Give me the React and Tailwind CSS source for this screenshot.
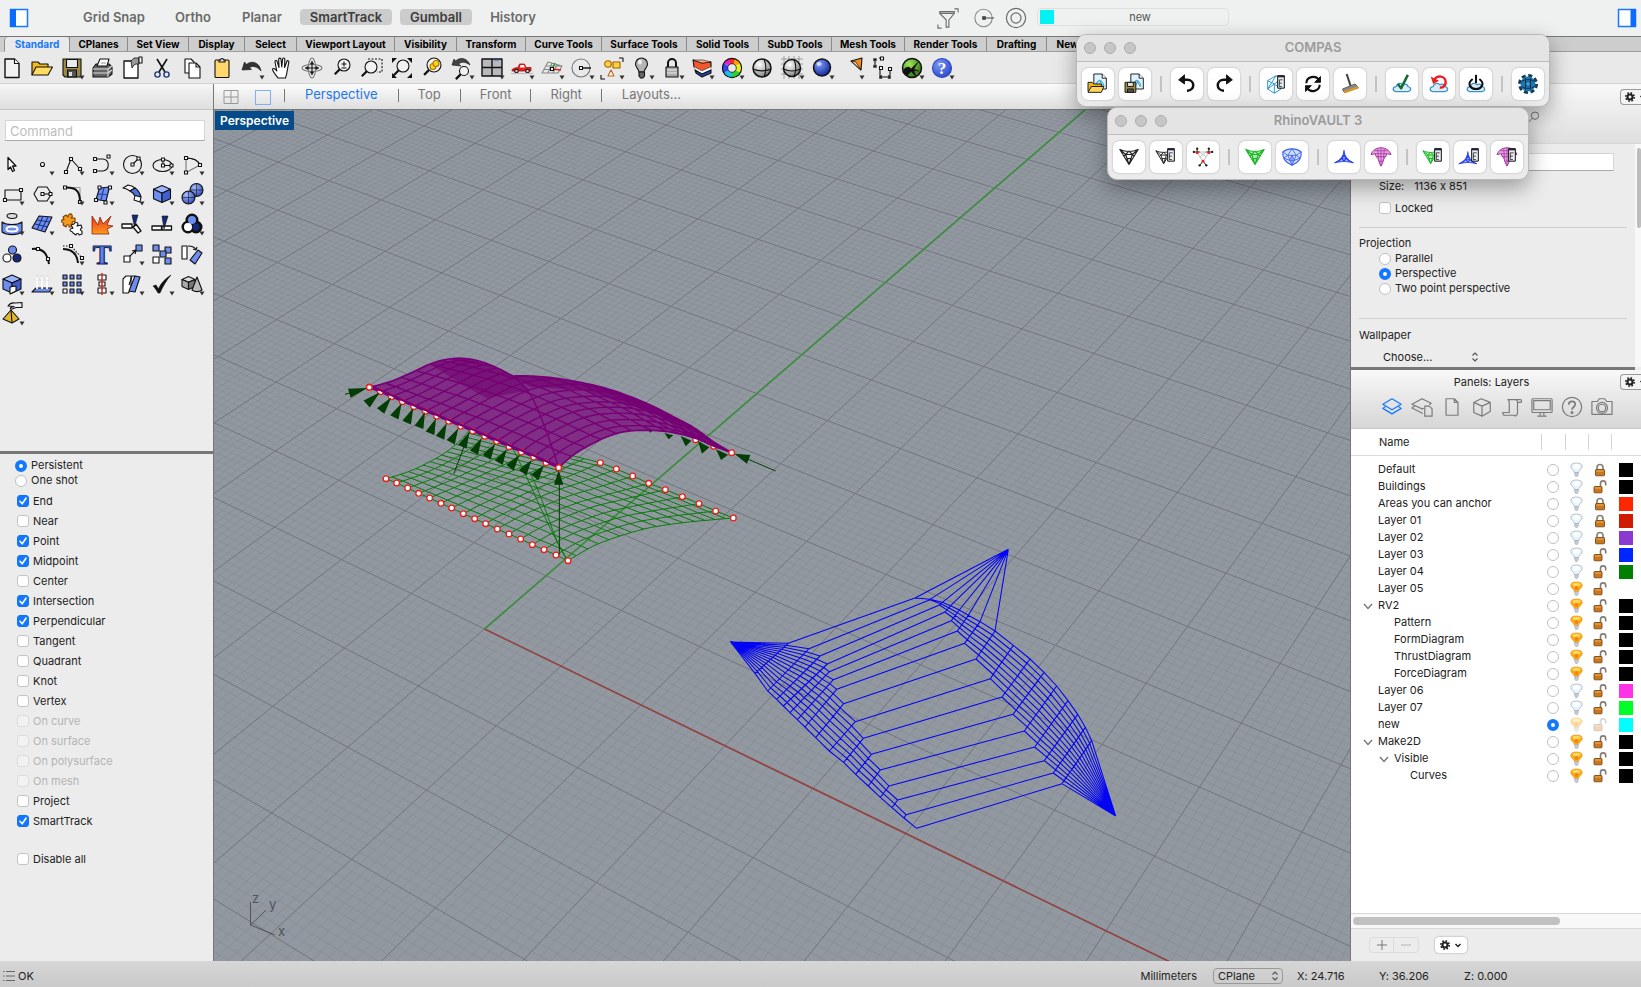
import React from "react";

/* ---------- construction plane projection ---------- */
const project = (u, v) => {
  const d = 1 - 0.0226 * u + 0.034 * v;
  return [(484.5 + 63.77 * u + 80.2 * v) / d, (629 + 22.07 * u - 33.7 * v) / d];
};
const f = (n) => n.toFixed(1);
const seg = (a, b) => `M${f(a[0])} ${f(a[1])}L${f(b[0])} ${f(b[1])}`;
const poly = (pts) => "M" + pts.map((p) => `${f(p[0])} ${f(p[1])}`).join("L");

const U0 = -13, U1 = 10, V0 = -5, V1 = 19;
let minorPath = "";
let majorPath = "";
for (let i = U0 * 10; i <= U1 * 10; i++) {
  const s = seg(project(i / 10, V0), project(i / 10, V1));
  if (i % 10 === 0) majorPath += s;
  else minorPath += s;
}
for (let i = V0 * 10; i <= V1 * 10; i++) {
  const s = seg(project(U0, i / 10), project(U1, i / 10));
  if (i % 10 === 0) majorPath += s;
  else minorPath += s;
}
const xAxis = seg(project(0, 0), project(10, 0));
const yAxis = seg(project(0, 0), project(0, 19));

/* ---------- helpers for surface patches ---------- */
const at = (pts, t) => {
  const x = Math.min(Math.max(t, 0), 1) * (pts.length - 1);
  const i = Math.min(Math.floor(x), pts.length - 2);
  const k = x - i;
  return [pts[i][0] + (pts[i + 1][0] - pts[i][0]) * k, pts[i][1] + (pts[i + 1][1] - pts[i][1]) * k];
};
const smooth = (pts) => {
  let out = [];
  const n = pts.length;
  for (let i = 0; i < n - 1; i++) {
    const p0 = pts[Math.max(i - 1, 0)], p1 = pts[i], p2 = pts[i + 1], p3 = pts[Math.min(i + 2, n - 1)];
    for (let k = 0; k < 8; k++) {
      const t = k / 8;
      out.push([0, 1].map((c) => 0.5 * (2 * p1[c] + (p2[c] - p0[c]) * t + (2 * p0[c] - 5 * p1[c] + 4 * p2[c] - p3[c]) * t * t + (3 * p1[c] - p0[c] - 3 * p2[c] + p3[c]) * t * t * t)));
    }
  }
  out.push(pts[n - 1]);
  return out;
};
const coons = (L, R, C0, C1) => (s, t) => {
  const l = at(L, s), r = at(R, s), a = at(C0, t), b = at(C1, t);
  const l0 = L[0], l1 = L[L.length - 1], r0 = R[0], r1 = R[R.length - 1];
  return [0, 1].map(
    (c) => (1 - t) * l[c] + t * r[c] + (1 - s) * a[c] + s * b[c] - ((1 - s) * ((1 - t) * l0[c] + t * r0[c]) + s * ((1 - t) * l1[c] + t * r1[c]))
  );
};
const mesh = (P, ns, nt, ease = 1) => {
  let d = "";
  for (let i = 0; i <= ns; i++) {
    const pts = [];
    for (let k = 0; k <= 30; k++) pts.push(P(i / ns, k / 30));
    d += poly(pts);
  }
  for (let j = 0; j <= nt; j++) {
    const t = 1 - Math.pow(1 - j / nt, ease);
    const pts = [];
    for (let k = 0; k <= 30; k++) pts.push(P(k / 30, t));
    d += poly(pts);
  }
  return d;
};

/* ---------- form diagram (green) ---------- */
const formLeft = [[168,416],[200,429],[233,444],[266,460],[299,474],[333,490],[365,504],[400,521],[434,536],[467,551],[502,567],[537,582],[572,597],[607,614],[642,629],[678,645],[714,662]];
const formRight = [[811,368],[859,387],[908,408],[956,430],[1006,449],[1057,470],[1107,491],[1157,513],[1210,534]];
const formBack = [];
for (let i = 0; i < 8; i++) formBack.push([420 + (391 * i) / 8, 270 + (98 * i) / 8]);
const formMesh = mesh(
  coons(formLeft, formBack.concat(formRight), smooth([[168,416],[235,395],[300,365],[350,335],[390,302],[420,270]]), smooth([[714,662],[790,618],[870,588],[960,563],[1060,548],[1140,540],[1210,534]])),
  16, 15
);

/* ---------- thrust diagram (purple) ---------- */
const thrustLeft = [[118,142],[151,155],[184,170],[217,185],[251,200],[286,214],[320,229],[356,244],[392,259],[428,273],[464,289],[500,304],[537,320],[574,336],[611,351],[648,368],[686,383]];
const hump = smooth([[118,142],[180,125],[240,100],[300,72],[350,58],[400,55],[450,64],[500,83],[548,108]]);
const crest = smooth([[548,108],[600,108],[680,115],[780,133],[860,155],[950,190],[1030,230],[1090,262],[1150,305],[1205,338]]);
const arch = smooth([[686,383],[730,345],[780,315],[840,287],[900,273],[980,272],[1040,280],[1100,296],[1150,318],[1205,338]]);
const thrustMesh = mesh(coons(thrustLeft, crest, hump, arch), 16, 15, 1.5);
const thrustOutline = poly(hump.concat(crest, arch.slice().reverse())) + "Z";

const cones = [
  [[112,144],[58,160]],[[150,157],[110,192]],[[184,172],[152,213]],[[215,190],[193,232]],[[250,203],[230,248]],[[285,215],[267,262]],[[318,235],[300,280]],[[350,250],[330,293]],[[385,265],[362,307]],[[418,277],[397,320]],[[455,295],[432,338]],[[495,312],[470,352]],[[530,328],[506,368]],[[568,345],[540,383]],[[605,360],[578,398]],[[642,376],[614,412]],[[686,390],[686,434]],[[1213,341],[1256,358]],
].map(([a, b]) => {
  const dx = b[0] - a[0], dy = b[1] - a[1], n = Math.hypot(dx, dy), w = 14;
  return `M${a[0]} ${a[1]}L${f(b[0] - (dy / n) * w)} ${f(b[1] + (dx / n) * w)}L${f(b[0] + (dy / n) * w)} ${f(b[1] - (dx / n) * w)}Z`;
}).join("");

/* ---------- force diagram (blue) ---------- */
const A = [92,336], B = [925,58], C = [1247,858];
const P = [[265,340],[327,356],[360,378],[382,402],[388,425],[400,449],[410,478],[431,521],[466,575],[490,625],[514,673],[541,720],[567,768],[593,810],[618,854],[650,895]];
const O = [[165,430],[203,483],[230,508],[250,528],[270,548],[292,569],[315,591],[347,623],[388,663],[431,697],[467,733],[505,768],[541,802],[576,833],[612,864],[650,895]];
const Q = [[645,204],[690,209],[718,225],[735,246],[754,272],[772,303],[794,340],[828,387],[871,446],[906,501],[939,553],[973,603],[1004,651],[1033,692],[1060,729],[1086,761]];
const W = [[645,204],[690,208],[727,217],[752,227],[778,240],[805,256],[840,275],[885,303],[940,346],[990,387],[1032,427],[1070,468],[1104,512],[1133,553],[1156,592],[1175,632]];
const mix = (a, b, k) => [a[0] + (b[0] - a[0]) * k, a[1] + (b[1] - a[1]) * k];
let force = "";
for (let i = 0; i < 16; i++) {
  force += seg(P[i], Q[i]) + seg(P[i], O[i]) + seg(Q[i], W[i]);
  if (i < 8) force += seg(W[i], B);
  const left = [A];
  for (let k = 0; k < i; k++) left.push(mix(P[k], O[k], (i - k) / (15 - k)));
  left.push(P[i]);
  force += poly(left);
  const right = [Q[i]];
  for (let k = i + 1; k < 16; k++) right.push(mix(Q[k], W[k], (k - i) / k));
  right.push(C);
  force += poly(right);
}

const Support = ({ p }) => <circle cx={p[0]} cy={p[1]} r="8.5" fill="#fff" stroke="#e8201c" strokeWidth="4" />;

function Scene() {
  return (
    <svg viewBox="214 110 1136 851" preserveAspectRatio="xMidYMid slice" className="absolute inset-0 h-full w-full" role="img" aria-label="Perspective view of form, thrust and force diagrams">
      <defs>
        <clipPath id="thrust"><path d={thrustOutline} /></clipPath>
      </defs>
      <rect x="0" y="0" width="1641" height="987" fill="#9198a0" />
      <path d={minorPath} stroke="#7c848d" strokeOpacity="0.5" strokeWidth="0.8" fill="none" />
      <path d={majorPath} stroke="#74747d" strokeWidth="1" fill="none" />
      <path d={xAxis} stroke="#934343" strokeWidth="1.7" />
      <path d={yAxis} stroke="#3d8d3f" strokeWidth="1.7" />
      <g transform="translate(330 340) scale(0.33333)" fill="none">
        <path d={formMesh} stroke="#087a08" strokeWidth="3" />
        <path d="M545 320C590 400 650 560 714 662M600 400C640 470 670 600 708 655" stroke="#087a08" strokeWidth="3" />
        <path d="M418 277L372 400M45 163L70 156M688 430V645M1250 356L1337 393" stroke="#063a06" strokeWidth="3" />
        {formLeft.map((p, i) => <Support key={i} p={p} />)}
        {formRight.map((p, i) => <Support key={i} p={p} />)}
        <Support p={[1097,299]} />
        <Support p={[1151,319]} />
        <path d={thrustOutline} fill="#802d86" stroke="#78007a" strokeWidth="5" />
        <g clipPath="url(#thrust)">
          <path d="M300 72L400 55L500 83L548 108L600 150L470 175L390 130Z" fill="#72066f" fillOpacity="0.6" />
          <path d="M548 108L680 115L860 155L1030 230L1205 338L1100 280L960 215L760 150L600 140Z" fill="#72066f" fillOpacity="0.7" />
          <path d={thrustMesh} stroke="#750073" strokeWidth="4" />
          <path d="M686 383C660 300 640 240 610 180C595 150 575 128 548 108" stroke="#750073" strokeWidth="4" />
        </g>
        {thrustLeft.map((p, i) => <Support key={i} p={p} />)}
        <path d={poly(thrustLeft)} transform="translate(4 -3)" stroke="#78007a" strokeWidth="7" />
        <path d={cones} fill="#033c05" />
        <path d="M1003 279L1030 286L1016 298ZM1052 288L1084 302L1067 319ZM1104 304L1138 322L1116 341ZM1158 328L1194 344L1173 360ZM957 273H966L961 278Z" fill="#033c05" />
        <Support p={[118,142]} />
        <Support p={[686,383]} />
        <Support p={[1205,338]} />
      </g>
      <path d={force} transform="translate(700 530) scale(0.33333)" fill="none" stroke="#0404f4" strokeWidth="3.2" />
      <g stroke="#50545a" fill="none"><path d="M250.5 902V925L266 910M250.5 925L275 935" /></g>
      <g fill="#50545a" fontSize="13" className="font-[Inter,sans-serif]">
        <text x="252" y="903">z</text><text x="269" y="909">y</text><text x="278" y="936">x</text>
      </g>
    </svg>
  );
}

/* ---------- icon primitives ---------- */
const Svg = ({ children, className = "h-6 w-6" }) => (
  <svg viewBox="0 0 24 24" className={className + " shrink-0 overflow-visible"} fill="none" stroke="#111" strokeWidth="1.1" strokeLinejoin="round" aria-hidden="true">{children}</svg>
);
const More = () => <path d="M19.5 19.5h5l-2.5 4z" fill="#333" stroke="none" />;
const S = ({ x, y, r = 1.5, fill = "#fff" }) => <rect x={x - r} y={y - r} width={2 * r} height={2 * r} fill={fill} />;
const Blue = "#6d8ef0";
const Lens = ({ x = 14, y = 10, r = 5.5 }) => (<><path d={`M${x - r * 0.7} ${y + r * 0.7}L${x - r * 0.7 - 5} ${y + r * 0.7 + 5}`} strokeWidth="2.2" /><circle cx={x} cy={y} r={r} fill="#f4f4f4" fillOpacity="0.8" /></>);
const Ball = ({ id, a, b }) => (<radialGradient id={id} cx="0.35" cy="0.3" r="0.8"><stop offset="0" stopColor={a} /><stop offset="1" stopColor={b} /></radialGradient>);

const standardTools = [
  ["New", <><path d="M5 3h9.500l4.500 4.500V21.500H5z" fill="#f1f1f1" strokeWidth="1.4" /><path d="M14.500 3v4.500H19" fill="#fff" /></>],
  ["Open", <><path d="M2 19V6h6l2 2h8v3" fill="#f5b91d" /><path d="M2 19L6 11H22.500L18 19z" fill="#ffdb60" /></>],
  ["Save", <><path d="M3 3h18v18H5l-2-2z" fill="#9c8b45" /><rect x="6.500" y="3.500" width="11" height="8" fill="#e9ecef" /><rect x="7.500" y="14" width="9" height="7" fill="#555" /><rect x="9" y="16" width="3" height="4" fill="#ddd" stroke="none" /><More /></>],
  ["Print", <><path d="M3 12l3-4h13l3 3v7l-4 3H3z" fill="#666" /><path d="M7 10l3-7h9l-2 7z" fill="#fff" /><path d="M3 13h15l4-3M3 17h15l4-3M18 13v8" stroke="#ddd" /><path d="M11 7h5" stroke="#999" /></>],
  ["Document properties", <><path d="M4 5h14v17H4z" fill="#fff" strokeWidth="1.300" /><path d="M11 5l3-3h5v6h-3l-2 1-2 3z" fill="#999" strokeWidth=".8" /><path d="M19 1h3v6h-3z" fill="#fff" /></>],
  ["Cut", <><path d="M7 3L15 16M17 3L9 16" strokeWidth="1.600" /><circle cx="7.500" cy="18.500" r="2.600" stroke="#1f3a7a" strokeWidth="1.400" /><circle cx="16.500" cy="18.500" r="2.600" stroke="#1f3a7a" strokeWidth="1.400" /></>],
  ["Copy", <><path d="M5 3h6l3 3v11H5z" fill="#fff" /><path d="M9 7h7l4 4v11H9z" fill="#fff" /><path d="M16 7v4h4" /></>],
  ["Paste", <><rect x="5" y="4" width="14" height="17.500" rx="1" fill="#ffd76b" /><path d="M9 6V4h1.500a1.500 1.500 0 013 0H15v2z" fill="#ddd" /></>],
  ["Undo", <><path d="M2 14L4.500 6l2 2.500C12 3.500 20 7 21 15 17 10.500 13 9.500 9.500 11.500l2 2z" fill="#333" strokeWidth=".6" /><More /></>],
  ["Pan", <path d="M8 22C6 19 2.500 15.500 2.500 13c1-1.300 2.700 0 4.300 2L5 6c-.3-1.700 1.800-2 2.200-.4L9 11.500 8.700 3.300c0-1.600 2.200-1.600 2.300 0l.8 7.700.8-8c.2-1.500 2.200-1.300 2.200.3l-.2 8.200 2.200-6c.5-1.400 2.300-.8 2 .7L17 16c-.3 2.500-1 4-1.500 6z" fill="#fff" />],
  ["Rotate view", <><ellipse cx="12" cy="12" rx="10" ry="3.500" stroke="#777" /><ellipse cx="12" cy="12" rx="3.500" ry="10" stroke="#777" /><path d="M12 7v10M7 12h10" /><path d="M10.500 8L12 5l1.500 3zM10.500 16L12 19l1.500-3zM16 10.500l3 1.500-3 1.500zM8 10.500L5 12l3 1.500z" fill="#111" strokeWidth=".5" /></>],
  ["Zoom", <><Lens x={14} y={9} r={6} /><path d="M11.500 8h5M14 5.500v5M11.500 12h5" /></>],
  ["Zoom window", <><path d="M8 3h14v13H17" strokeDasharray="2 1.500" /><Lens x={11} y={11} r={6} /></>],
  ["Zoom extents", <><Lens x={13} y={10} r={6} /><path d="M2 2h5L2 7zM22 2h-5l5 5zM22 22h-5l5-5zM2 22h5l-5-5z" fill="#111" stroke="none" /></>],
  ["Zoom selected", <><Lens x={14} y={9} r={7} /><circle cx="13" cy="10.500" r="3" fill="#ffd21f" stroke="#a70" /><circle cx="16" cy="7.500" r="3" fill="#ffd21f" stroke="#a70" /></>],
  ["Undo view", <><Lens x={14} y={15} r={4.500} /><path d="M2 9L4 3l1.500 2C11 0 18 3 20 9 16 6 12 5 8.500 8l2.500 2z" fill="#444" strokeWidth=".6" /><More /></>],
  ["Four viewports", <><rect x="2" y="3" width="20" height="17" fill="#b9b9bb" strokeWidth="1.400" /><path d="M12 3v17M2 11.500h20" strokeWidth="1.400" /><path d="M14 4h5" stroke="#3553c9" /><More /></>],
  ["Car", <><path d="M2 14c1-2 3-2 6-2.500L9.500 8h5l1.500 3.500h5v3.500H2z" fill="#e8201c" stroke="#b01010" strokeWidth=".8" /><path d="M10.500 9h3.500l.8 2.500h-5z" fill="#fff" stroke="none" /><circle cx="6.500" cy="15" r="1.800" fill="#ccc" /><circle cx="17.500" cy="15" r="1.800" fill="#ccc" /><path d="M1 17.500h22" stroke="#bbb" /><More /></>],
  ["CPlane", <><path d="M8 6L2 17h16l4-7zM6 10h15M4 13.500h16M12 7l-4 10M17 9l-4 8" stroke="#888" /><path d="M12 13l9 1" stroke="#d22" strokeWidth="1.500" /><path d="M12 13l3-6" stroke="#2a2" strokeWidth="1.500" /><S x={12} y={13} /><More /></>],
  ["Object snap", <><circle cx="11" cy="12" r="9" stroke="#777" /><path d="M11 12h10" strokeWidth="1.400" /><S x={11} y={12} /><More /></>],
  ["Select", <><path d="M19 2h4v4M1 19v4h4" /><circle cx="8" cy="8" r="3.300" fill="#ffd43b" stroke="#a65b00" /><rect x="13" y="6" width="7" height="6" fill="#ffd43b" stroke="#a65b00" /><path d="M11 14l3 6H8z" fill="#fff" stroke="#c4631b" /><More /></>],
  ["Lights", <><path d="M9 16c0-3-3.500-4-3.500-8a6 6 0 0112 0c0 4-3.500 5-3.500 8z" fill="#b4b4b4" /><path d="M9 16h5.500v4l-1.500 2h-2.500L9 20z" fill="#666" /><ellipse cx="10" cy="6" rx="2" ry="2.500" fill="#eee" stroke="none" /><More /></>],
  ["Lock", <><path d="M8 12V7a4 4 0 018 0v5" strokeWidth="2" /><rect x="6" y="11" width="12" height="10" fill="#aaa" /><path d="M7 14h10M7 17h10" stroke="#eee" /><More /></>],
  ["Layers", <><path d="M3 4l9 3 9-1v5l-9 4-8-4z" fill="#f4572c" /><path d="M4 11l8 4 9-4v3l-9 4-7-4z" fill="#fff" stroke="#999" strokeWidth=".7" /><path d="M5 14l7 4 9-4v3l-9 4-6-4z" fill="#2446b8" /><path d="M3 4l9 3 9-1-8-2z" fill="#ffb08f" strokeWidth=".6" /><More /></>],
  ["Color wheel", <><g strokeWidth="5.500" fill="none"><path d="M12 5A7 7 0 0118 8.500" stroke="#ff9d00" /><path d="M18 8.500A7 7 0 0118 15.500" stroke="#e8ef1e" /><path d="M18 15.500A7 7 0 0112 19" stroke="#28d12f" /><path d="M12 19A7 7 0 016 15.500" stroke="#18c3e8" /><path d="M6 15.500A7 7 0 016 8.500" stroke="#3344ee" /><path d="M6 8.500A7 7 0 0112 5" stroke="#e223c9" /><path d="M10 5.300A7 7 0 0114 5.300" stroke="#f22" /></g><circle cx="12" cy="12" r="9.600" /><circle cx="12" cy="12" r="4.300" fill="#e9e9e9" strokeWidth=".8" /><More /></>],
  ["Shaded", <><Ball id="gb" a="#fff" b="#777" /><circle cx="12" cy="12" r="9" fill="url(#gb)" strokeWidth="1.500" /><path d="M3 13c5 2.500 13 2.500 18 0M14 3c2.500 6 2.500 12 0 18" /></>],
  ["Rendered", <><path d="M1 3h22M1 8h22M1 13h22M1 18h22M4 0v23M9 0v23M14 0v23M19 0v23" stroke="#888" strokeWidth=".8" /><circle cx="12" cy="12" r="8.500" fill="url(#gb)" strokeWidth="1.500" /><path d="M3.500 13c5 2.500 12 2.500 17 0M14 3.500c2.500 6 2.500 11 0 17" /><More /></>],
  ["Environment", <><Ball id="bb" a="#7f9cff" b="#0a1c8f" /><circle cx="12" cy="11.500" r="8.500" fill="url(#bb)" strokeWidth="1.500" /><ellipse cx="9" cy="8" rx="2.500" ry="2" fill="#cfdcff" stroke="none" /><More /></>],
  ["Spotlight", <><path d="M11 5l11-3-1 12z" fill="#f58a1f" /><path d="M11 5l5 1 5 8z" fill="#ffd391" strokeWidth=".7" /><More /></>],
  ["Dimension", <><path d="M5 3v8M3 3h4M3 11h4M9 2h5M10 11h3M10 14v9M20 14v9M10 21h10" /><path d="M3.500 5L5 3l1.500 2M3.500 9L5 11l1.500-2M12 19.500L10 21l2 1.500M18 19.500l2 1.500-2 1.500" /><S x={12} y={2.500} /><S x={11} y={12} /><S x={20} y={13} /></>],
  ["Grasshopper", <><Ball id="gg" a="#a4e659" b="#216a10" /><circle cx="12" cy="12" r="9.500" fill="url(#gg)" strokeWidth="1.500" /><path d="M3 17c0-4 3-6 6-6l2 2 7-7-4 7 5 2-5-.5 2 6-5-5c-1 2-3 2-3 4z" fill="#111" strokeWidth=".5" /><More /></>],
  ["Help", <><Ball id="hb" a="#7b96f5" b="#2a45c4" /><circle cx="12" cy="12" r="9.500" fill="url(#hb)" stroke="#2a45c4" /><text x="12" y="18" fontSize="17" fontWeight="700" textAnchor="middle" fill="#fff" stroke="none" className="font-[Liberation_Serif,serif]">?</text><More /></>],
];

const Cube = ({ x = 12, y = 12, s = 9, c = ["#9db3ff", "#6d8ef0", "#3f5fd0"] }) => (
  <>
    <path d={`M${x} ${y - s}L${x + s} ${y - s * 0.55}L${x} ${y - s * 0.1}L${x - s} ${y - s * 0.55}Z`} fill={c[0]} />
    <path d={`M${x - s} ${y - s * 0.55}L${x} ${y - s * 0.1}V${y + s}L${x - s} ${y + s * 0.55}Z`} fill={c[1]} />
    <path d={`M${x + s} ${y - s * 0.55}L${x} ${y - s * 0.1}V${y + s}L${x + s} ${y + s * 0.55}Z`} fill={c[2]} />
  </>
);

const modelTools = [
  ["Pointer", <path d="M8 5.500V17.500l2.500-2.500 2 4.500 2-1-2-4.500h3.500z" fill="#fff" strokeWidth="1.300" />],
  ["Point", <><circle cx="12.500" cy="12.500" r="2" fill="#fff" /><More /></>],
  ["Polyline", <><path d="M6 20L11 7l9 10" /><S x={6} y={20} /><S x={11} y={7} /><S x={20} y={17} /><More /></>],
  ["Curve", <><path d="M5 7h8c7 1 7 11 0 12H5" /><S x={5} y={7} /><S x={18.500} y={4.500} /><S x={5} y={19} /><More /></>],
  ["Circle", <><circle cx="12.500" cy="12.500" r="9" /><path d="M12.500 12.500l6-6" /><S x={12.500} y={12.500} /><S x={18.500} y={6.500} /><More /></>],
  ["Ellipse", <><ellipse cx="12.500" cy="13.500" rx="9.500" ry="6" /><path d="M13 7.500v6h8" /><S x={13} y={7.500} /><S x={13} y={13.500} /><S x={21.500} y={13.500} /><More /></>],
  ["Arc", <><path d="M6 6c7 0 12 2 14 7L6 20.500z" stroke="#777" /><path d="M6 6c7 0 12 2 14 7" /><S x={6} y={6} /><S x={20} y={13} /><S x={6} y={20.500} /><More /></>],
  ["Rectangle", <><rect x="5" y="8" width="16" height="10" /><S x={5} y={18} /><S x={21} y={8} /><More /></>],
  ["Polygon", <><path d="M8 5h9l4.500 7-4.500 7H8L4 12z" /><path d="M12.500 12H21" /><S x={12.500} y={12} /><S x={20.500} y={12} /><More /></>],
  ["Fillet", <><path d="M5 5.500H20V20" stroke="#999" /><path d="M5 5.500C16 5 20 9 20 20" strokeWidth="2" /><S x={5} y={5.500} /><S x={20} y={20} /><More /></>],
  ["Surface", <><path d="M9.500 6l10-1L16 19 6 17.500z" fill={Blue} /><path d="M14 5.500L11 18M8 12l10 .5" stroke="#223a9a" /><S x={9.500} y={5.500} /><S x={20} y={5.500} /><S x={6} y={18} /><S x={15.500} y={20.500} /><More /></>],
  ["Sweep", <><path d="M3 6l5-3c3 .5 5 1.500 7 3l-5 3c-2-1.500-4-2.500-7-3z" fill="#fff" /><path d="M15 6c3 2 5 5 6 9l-6-1c-1-2-3-4-5-5z" fill="#4d72e2" /><path d="M15 13.500l6 1.500-1 5-6-2z" fill="#fff" /><More /></>],
  ["Box", <><Cube x={12} y={12} s={8.500} /><More /></>],
  ["Sphere", <><Ball id="sb" a="#a9bdff" b="#2742ad" /><circle cx="16.500" cy="8" r="6.500" fill="url(#sb)" /><path d="M10 8h13M16.500 1.500v13" strokeWidth=".6" /><circle cx="8.500" cy="15.500" r="6.500" fill="url(#sb)" /><path d="M2 15.500h13M8.500 9v13" strokeWidth=".6" /><More /></>],
  ["Revolve", <><ellipse cx="12" cy="4" rx="5" ry="2.500" fill="#ddd" /><path d="M2 10c5 3.500 15 3.500 20 0v10c-5 3.500-15 3.500-20 0z" fill={Blue} /><ellipse cx="12" cy="17" rx="5.500" ry="2.500" fill={Blue} stroke="#fff" strokeWidth="2" /><More /></>],
  ["Patch", <><path d="M9 4l13 1-7 15L2 16z" fill={Blue} /><path d="M13 4L7 18M18 5l-7 14M7 8l13 2M5 12l13 3" stroke="#1d327f" /><More /></>],
  ["Join", <><path d="M3 5l3-2 2 2c0-3 3-4 4-2s-1 3-1 3h4v4c-2-1-3 0-3 1s1 2 2 2l-2 2H9c1-3-3-3-3 0L3 13c1-1 1-2 0-2s-2-2-1-3 2 0 2 0z" fill="#f59a1c" stroke="#7a4300" /><path d="M11 13l3-1c1-2 4-2 4 0l-1 2 4-1 1 3c-2 0-2 3 0 3v3l-3 1c0-2-3-2-3 0l-3-2c0-2-3-1-3-3s3-1 3-2z" fill="#fff" /></>],
  ["Explode", <><linearGradient id="ex" x2="0" y2="1"><stop offset="0" stopColor="#e9321e" /><stop offset="1" stopColor="#ff9a1f" /></linearGradient><path d="M2 22V4l6 9 2-8 3 7 8-8-4 9 6 1-6 3 2 5z" fill="url(#ex)" stroke="#8c2a06" strokeWidth=".8" /></>],
  ["Trim", <><path d="M2 12h10v4H2zM13 15l3-3 5 7-3 2z" fill="#fff" strokeWidth="1.300" /><path d="M12 3h6l-3.500 12z" fill="#142a78" strokeWidth=".6" /></>],
  ["Split", <><path d="M2 14h9.500v4H2zM12 14h9.500v4H12z" fill="#fff" strokeWidth="1.300" /><path d="M12 4h6l-4 13z" fill="#142a78" strokeWidth=".6" /></>],
  ["Boolean union", <><circle cx="12" cy="8" r="5" fill={Blue} strokeWidth="3" /><circle cx="8" cy="15" r="5" fill="#fff" strokeWidth="3" /><circle cx="16" cy="15" r="5" fill="#142a78" strokeWidth="3" /><circle cx="12" cy="8" r="4" fill={Blue} stroke="none" /><circle cx="8" cy="15" r="4" fill="#fff" stroke="none" /><More /></>],
  ["Group", <><circle cx="12.500" cy="8" r="4" fill={Blue} /><circle cx="7" cy="16" r="4" fill="#fff" /><circle cx="17" cy="16" r="4" fill="#142a78" /></>],
  ["Edit points", <><path d="M2 7c10-1 15 3 17 15" strokeWidth="2" /><S x={8} y={7} /><S x={18} y={17} /></>],
  ["Offset curve", <><path d="M3 7c9 0 14 5 15 14" strokeWidth="2" /><path d="M3 4h8l11 12" strokeDasharray="1.500 1.500" /><S x={11} y={4} /><S x={22} y={16} /><More /></>],
  ["Text", <text x="12" y="22" fontSize="28" fontWeight="700" textAnchor="middle" fill="#5f84ee" stroke="#14235c" className="font-[Liberation_Serif,serif]">T</text>],
  ["Move", <><path d="M9 15l7-7M16 8l-4 1M16 8l-1 4" /><rect x="4" y="14" width="6" height="6" fill="#fff" /><rect x="16" y="3" width="6" height="6" fill={Blue} /><More /></>],
  ["Copy objects", <><rect x="3" y="3" width="6" height="6" fill={Blue} /><rect x="15" y="5" width="6" height="6" fill={Blue} /><rect x="10" y="9" width="6" height="6" fill={Blue} /><rect x="3" y="15" width="6" height="6" fill="#fff" /><rect x="15" y="16" width="6" height="6" fill={Blue} /></>],
  ["Rotate", <><rect x="2" y="4" width="5" height="13" fill="#fff" /><path d="M8 4c4 0 7 1 8 4M16 8l-3-1M16 8l1-3" /><path d="M18 8l4 3-7 11-5-4z" fill={Blue} /></>],
  ["Solid edit", <><Cube x={12} y={12} s={9} /><path d="M10 15l6-1v5l-6 3z" fill="#fff" /><More /></>],
  ["Project", <><path d="M6 16h16l-3 4H2z" fill={Blue} /><path d="M7 17V6M12 17V6M17 17V6" stroke="#fff" strokeWidth="1.800" /><path d="M4.500 8L7 3l2.500 5zM9.500 8L12 3l2.500 5zM14.500 8L17 3l2.500 5z" fill="#fff" stroke="#ccc" strokeWidth=".5" /><More /></>],
  ["Array", <>{[5, 12, 19].map((y) => [5, 12, 19].map((x) => <S key={x + "-" + y} x={x} y={y} r={2} fill={x === 5 && y === 19 ? "#fff" : Blue} />))}<More /></>],
  ["Align", <><rect x="8" y="3" width="8" height="5" fill="#fff" /><rect x="9" y="10" width="6" height="4" fill="#fff" /><rect x="8" y="16" width="8" height="5" fill="#fff" /><path d="M12 1v22" stroke="#e02020" strokeWidth="1.500" /><More /></>],
  ["Shear", <><path d="M3 7l3-3h5v14l-3 3H3z" fill="#fff" /><path d="M15 4l5 1-5 15-6-1z" fill={Blue} /><path d="M15 4l-3 0-3 9" /><More /></>],
  ["Check", <><path d="M3 14l3-1 2.500 4C11 11 15 7 21 3c-5 6-8 11-11 18H8C6.500 18 5 16 3 14z" fill="#111" strokeWidth=".6" /><More /></>],
  ["Analyze", <><Cube x={8.500} y={11} s={6.500} c={["#ddd", "#aaa", "#777"]} /><path d="M17 5l5 13c-3 2-7 2-10 0z" fill="#bbb" /><More /></>],
  ["Block", <><path d="M8 4c2-3 4-3.500 7-3l7-.5v5h-6l-4 1.500c-2 .5-2-.5-1-1.500l3-1z" fill="#eee" /><path d="M11 8l8 9-7 4-9-4z" fill="#e3b632" /><path d="M11 8l1 13" /><More /></>],
];

/* ---------- floating toolbars ---------- */
const Props = ({ x = 14, y = 2 }) => (<><rect x={x} y={y} width="8" height="15" fill="#e8ecf1" strokeWidth="1.200" /><path d={`M${x} ${y + 1}h8`} strokeWidth="2" stroke="#223" /><path d={`M${x + 2} ${y + 5}h4M${x + 2} ${y + 5}v8M${x + 2} ${y + 9}h3M${x + 2} ${y + 13}h3`} strokeWidth=".9" /></>);
const Doc = () => (<><path d="M7 0h10l5 5v13H7z" fill="#dff3fb" /><path d="M17 0v5h5" fill="#fff" /><path d="M9 15c0-9 10-9 10 0M9 13l5-6 4 8M12 15l4-7" stroke="#2a9bd0" /></>);
const Cloud = () => <path d="M4 21c-4-1-3-6 1-6 1-4 6-5 8-2 3-2 6 0 6 2 5 1 4 6 0 6z" fill="#dcebf5" stroke="#3a93c8" strokeWidth="1.500" />;
const Vault = ({ c }) => <path d="M1 3l11 18L23 3C16 6 8 6 1 3zM1 3l7 6h8l7-6M8 9l4 12M16 9l-4 12M8 9l4-4 4 4M9 14h6M6 11l2-2M18 11l-2-2" stroke={c} strokeWidth="1.400" />;
const Force = ({ c = "#2e43ee" }) => <path d="M12 4c0 7-4 12-11 15 7-2 15-2 22 0C16 16 12 11 12 4zM12 10l-3 4 3 3 3-3zM9 14l-3 3M15 14l3 3M9 14h6" stroke={c} strokeWidth="1.300" fill="#9fc0ff" />;
const Thrust = () => (<><path d="M12 1C6 1 2 4 0 9l3-.5 2-.5 1.500 4 2 2 1.500 5 2 4 2-4 1.500-5 2-2 1.500-4 2 .5 3 .5C22 4 18 1 12 1z" fill="#e3a8e3" stroke="#a5309f" strokeWidth="1.200" /><path d="M8 2l1 12M12 1v21M16 2l-1 12M4 4.500h16M5 8h14M7 11.500h10M9.500 17h5" stroke="#a5309f" strokeWidth=".9" /></>);
const Gear = ({ className }) => (
  <svg viewBox="0 0 24 24" className={className} fill="none" stroke="currentColor" aria-hidden="true"><circle cx="12" cy="12" r="6" strokeWidth="5" /><circle cx="12" cy="12" r="10" strokeWidth="4" strokeDasharray="3.900 3.950" /></svg>
);

const compasGroups = [
  [["Open session", <><Doc /><path d="M0 21V10h5l2 2h9v3" fill="#eab525" /><path d="M0 22l4-7h15l-3 7z" fill="#ffd65a" /></>], ["Save session", <><Doc /><rect x="0" y="10" width="13" height="12" fill="#9c8b45" /><rect x="3" y="10" width="7" height="5" fill="#ddd" /><rect x="3" y="18" width="7" height="4" fill="#555" /></>]],
  [["Undo", <><path d="M7 7h5c10 0 10 13 0 13" strokeWidth="3" /><path d="M9 1v11L2 7z" fill="#111" /></>], ["Redo", <><path d="M17 7h-5c-10 0-10 13 0 13" strokeWidth="3" /><path d="M15 1v11l7-5z" fill="#111" /></>]],
  [["Scene", <><path d="M2 8l10-6 6 4v12l-8 5-8-5zM2 8l8 4 8-6M10 12v11M2 18l8-6 8 6M12 2L2 18" stroke="#2d9bd3" strokeWidth="1.200" /><Props x={14} /></>], ["Refresh", <><path d="M4 11c0-8 11-10 15-4M20 13c0 8-11 10-15 4" strokeWidth="2.500" /><path d="M21 3v7h-7zM3 21v-7h7z" fill="#111" /></>], ["Clear", <><path d="M8 0l5 15" strokeWidth="2.500" stroke="#444" /><path d="M3 18l15-6 4 4-17 6z" fill="#8a8a8a" stroke="#555" /><path d="M5 22l17-6" stroke="#d99a2a" strokeWidth="3" /></>]],
  [["Cloud check", <><Cloud /><path d="M7 12l4 5L19 1" stroke="#116a35" strokeWidth="3" /></>], ["Cloud restart", <><Cloud /><path d="M6 8c3-8 15-6 14 3-1 4-4 6-7 5" stroke="#ee1d23" strokeWidth="3" /><path d="M2 3l3 9 7-4z" fill="#ee1d23" stroke="none" /></>], ["Cloud stop", <><Cloud /><path d="M8 6c-8 6-2 12 4 12s12-6 4-12" strokeWidth="2.500" /><path d="M12 1v10" strokeWidth="2.500" /></>]],
  [["Settings", <><circle cx="12" cy="12" r="9.500" stroke="#123a5c" strokeWidth="5" strokeDasharray="4.500 2.960" /><circle cx="12" cy="12" r="6" stroke="#1c78b4" strokeWidth="6" /><circle cx="12" cy="12" r="3" fill="#3f9fd4" stroke="#123a5c" /><path d="M4 9c5-3 11-3 16 0M4 15c5 3 11 3 16 0M9 5v14M15 5v14" stroke="#0c2c48" /></>]],
];
const rhinoGroups = [
  [["Pattern", <Vault c="#222" />], ["Pattern settings", <><g transform="translate(-1 2) scale(.85)"><Vault c="#222" /></g><Props x={14} /></>], ["Boundary", <><path d="M5 6l7 12 7-12M5 6h14M8 6l8 6M16 6l-8 6" stroke="#bbb" /><path d="M1 6h7M16 6h7M5 2v6M19 2v6M12 17l-4 5M12 17l4 5" /><g fill="#e22" stroke="none"><circle cx="5" cy="7" r="1.700" /><circle cx="19" cy="7" r="1.700" /><circle cx="12" cy="17" r="1.700" /></g><g fill="#222" stroke="none"><circle cx="1" cy="6" r="1.400" /><circle cx="23" cy="6" r="1.400" /><circle cx="5" cy="2" r="1.400" /><circle cx="19" cy="2" r="1.400" /><circle cx="8" cy="22" r="1.400" /><circle cx="16" cy="22" r="1.400" /></g></>]],
  [["Form diagram", <><path d="M1 3l11 18L23 3C16 6 8 6 1 3z" fill="#a8eda8" stroke="none" /><Vault c="#1fb52a" /></>], ["Force diagram", <><path d="M1 6C7 1 17 1 23 6c1 8-4 13-11 16C5 19 0 14 1 6z" fill="#cfe0ff" stroke="#3b5cf0" strokeWidth="1.300" /><path d="M1 6l6 4h10l6-4M2 13l7 3h6l7-3M7 10l5-8 5 8-5 12zM7 10l-5 3M17 10l5 3M9 16l3-6 3 6M12 10v12" stroke="#3b5cf0" strokeWidth="1" /></>]],
  [["Horizontal equilibrium", <Force />], ["Vertical equilibrium", <Thrust />]],
  [["Form settings", <><g transform="translate(-1 2) scale(.85)"><path d="M1 3l11 18L23 3C16 6 8 6 1 3z" fill="#a8eda8" stroke="none" /><Vault c="#1fb52a" /></g><Props x={14} /></>], ["Force settings", <><g transform="translate(-2 2) scale(.95)"><Force /></g><Props x={14} /></>], ["Thrust settings", <><Thrust /><Props x={14} /></>]],
];

function FloatingBar({ title, groups, place }) {
  return (
    <section aria-label={title} className={"absolute rounded-[10px] border border-[#b9b9b9] bg-[#ebebeb] shadow-[0_8px_22px_rgba(0,0,0,0.35)] " + place}>
      <header className="relative flex h-[27px] items-center gap-2 rounded-t-[10px] border-b border-[#bcbcbc] bg-[#e4e4e4] px-[7px]">
        {["Close", "Minimize", "Zoom"].map((n) => <button key={n} aria-label={n} className="h-3 w-3 rounded-full border border-[#adadad] bg-[#c6c6c6]" />)}
        <h2 className="absolute inset-x-0 text-center text-[13px] font-semibold text-[#9b9b9b] pointer-events-none">{title}</h2>
      </header>
      <div className="flex gap-[5px] px-[5px] py-1.5">
        {groups.map((g, i) => (
          <React.Fragment key={i}>
            {i > 0 && <span className="mx-1 my-2 w-0.5 bg-[#c4c4c4]" />}
            {g.map(([name, art]) => (
              <button key={name} aria-label={name} className="flex h-8 w-8 items-center justify-center rounded-[6px] bg-white shadow-[0_0_2px_rgba(0,0,0,0.3)]">
                <Svg className="h-5 w-5">{art}</Svg>
              </button>
            ))}
          </React.Fragment>
        ))}
      </div>
    </section>
  );
}

/* ---------- form controls ---------- */
function Check({ label, on, off }) {
  return (
    <label className={`flex items-center gap-1 ${off ? "text-[#b4b4b4]" : ""}`}>
      <span className="relative flex h-3 w-3">
        <input type="checkbox" defaultChecked={on} disabled={off} className="peer h-3 w-3 appearance-none rounded-[3px] border border-[#c4c4c4] bg-white checked:border-[#0f73ff] checked:bg-[#1478ff] disabled:border-[#dcdcdc] disabled:bg-[#f2f2f2]" />
        <svg viewBox="0 0 12 12" className="pointer-events-none absolute inset-0 hidden h-3 w-3 peer-checked:block" fill="none" stroke="#fff" strokeWidth="1.600" strokeLinecap="round"><path d="M3 6.300l2.200 2.500L9 3.200" /></svg>
      </span>
      {label}
    </label>
  );
}
const radioClass = "h-3 w-3 shrink-0 appearance-none rounded-full border border-[#c0c0c0] bg-white checked:border-4 checked:border-[#1478ff]";
const Radio = ({ label, name, on }) => (
  <label className="flex h-[15px] items-center gap-1"><input type="radio" name={name} defaultChecked={on} className={radioClass} />{label}</label>
);
const UpDown = ({ className }) => (
  <svg viewBox="0 0 8 12" className={className} fill="none" stroke="#555" strokeWidth="1.200" aria-hidden="true"><path d="M1.500 4.500L4 2l2.500 2.500M1.500 7.500L4 10l2.500-2.500" /></svg>
);
const GearButton = ({ className }) => (
  <button aria-label="Panel options" className={"flex h-4 items-center gap-1 text-[#222] " + className}>
    <Gear className="h-2.5 w-2.5 shrink-0" />
    <svg viewBox="0 0 8 8" className="h-2 w-2 shrink-0" fill="none" stroke="currentColor" strokeWidth="1.500"><path d="M1.500 3L4 5.500 6.500 3" /></svg>
  </button>
);
const edgeGear = "w-[21px] overflow-hidden rounded-l border border-r-0 border-[#999] bg-[#f4f4f4] pl-1";

/* ---------- layers ---------- */
const layers = [
  ["Default", 0, 0, 1, "#000000"], ["Buildings", 0, 0, 0, "#000000"], ["Areas you can anchor", 0, 0, 1, "#ff2600"], ["Layer 01", 0, 0, 1, "#d11b00"],
  ["Layer 02", 0, 0, 1, "#8a3ad0"], ["Layer 03", 0, 0, 0, "#0026ff"], ["Layer 04", 0, 0, 0, "#008000"], ["Layer 05", 0, 1, 0, "#ffffff"],
  ["RV2", 0, 1, 0, "#000000", true], ["Pattern", 1, 1, 0, "#000000"], ["FormDiagram", 1, 1, 0, "#000000"], ["ThrustDiagram", 1, 1, 0, "#000000"], ["ForceDiagram", 1, 1, 0, "#000000"],
  ["Layer 06", 0, 0, 0, "#ff33e6"], ["Layer 07", 0, 0, 0, "#00ff26"], ["new", 0, 1, 0, "#00ffff"], ["Make2D", 0, 1, 0, "#000000", true], ["Visible", 1, 1, 0, "#000000", true], ["Curves", 2, 1, 0, "#000000"],
];
const indents = ["pl-[11px]", "pl-[27px]", "pl-[43px]"];

const Bulb = ({ on }) => (
  <svg viewBox="0 0 13 15" className="mx-auto h-[15px] w-[13px]" aria-hidden="true">
    <path d="M4.500 10.500C4 8 .8 7 .8 4.500.8 2 3 1 6.500 1s5.700 1 5.700 3.500C12.200 7 9 8 8.500 10.500z" fill={on ? "#fba919" : "#e9f3fb"} stroke={on ? "#f0a020" : "#a9b6c2"} strokeWidth=".8" />
    {on ? <ellipse cx="6.500" cy="3.500" rx="4" ry="1.800" fill="#ffd95a" /> : <ellipse cx="6.500" cy="4.500" rx="3" ry="2.500" fill="#fff" />}
    {on ? <ellipse cx="6.500" cy="7" rx="1.800" ry="2" fill="#f5820f" /> : null}
    <path d="M4.700 10.500h3.600v2.500l-1 1.500H5.700l-1-1.500z" fill="#c3cbd4" stroke="#9aa5b0" strokeWidth=".5" />
  </svg>
);
const Padlock = ({ locked }) => (
  <svg viewBox="0 0 14 15" className="mx-auto h-[15px] w-[14px]" fill="none" aria-hidden="true">
    {locked ? <path d="M4 8V5.500a3 3 0 016 0V8" stroke="#8a8178" strokeWidth="1.700" /> : <path d="M7.500 8V4.500a2.600 2.600 0 015.200 0V6.500" stroke="#857c74" strokeWidth="1.600" />}
    <rect x={locked ? 2.500 : 1} y="7.500" width={locked ? 9 : 8} height="6.300" rx=".8" fill="#c8761f" stroke="#7d4a12" strokeWidth=".9" />
    <path d={locked ? "M3.500 9h7" : "M2 9h6"} stroke="#f2b25c" strokeWidth="1" />
  </svg>
);

const panelIcons = [
  ["Layers", <><path d="M12 3l10 6-10 6L2 9z" /><path d="M5 11.500L2 13.500l10 6 10-6-3-2" /></>],
  ["Layer states", <><path d="M14 13.500L12 14 1 9l11-6 10 5-2 1.500M4 11l-3 2 12 6M15 11h5l3 3v8h-8z" /></>],
  ["Notes", <path d="M5.500 3h9l4 4v14h-13zM14.500 3v4h4" />],
  ["Blocks", <path d="M11 3l10 4v10l-9 5-9-4V7zM3 7l9 4 9-4M12 11v11" />],
  ["Scripts", <path d="M7 4h14c2 0 2 3 0 3h-3v11c0 4-3 4-4 3M18 7c0-1-1-3-2-3M7 4c2 0 2 3 2 3v11H2c0 3 1 3 2 3h11" />],
  ["Display", <><rect x="1" y="3" width="22" height="15" rx="1" /><rect x="3" y="5" width="18" height="10" /><path d="M10 18v3M14 18v3M7 22h10" /></>],
  ["Help", <><circle cx="12" cy="12" r="10.500" /><path d="M8.500 9.500c0-5 7-4.500 7-.5 0 3-3.500 3-3.500 6" strokeWidth="1.800" /><circle cx="12" cy="18" r="1" /></>],
  ["Snapshots", <><path d="M1 6h6l2-3h6l2 3h6v14H1z" /><circle cx="12" cy="13" r="6" /><circle cx="12" cy="13" r="4" /></>],
];

const tabs = [["Standard", "w-[65px]"], ["CPlanes", "w-[58px]"], ["Set View", "w-[61px]"], ["Display", "w-[56px]"], ["Select", "w-[52px]"], ["Viewport Layout", "w-[98px]"], ["Visibility", "w-[62px]"], ["Transform", "w-[69px]"], ["Curve Tools", "w-[76px]"], ["Surface Tools", "w-[85px]"], ["Solid Tools", "w-[72px]"], ["SubD Tools", "w-[73px]"], ["Mesh Tools", "w-[73px]"], ["Render Tools", "w-[82px]"], ["Drafting", "w-[60px]"], ["New in V7", "w-[69px]"]];
const osnaps = [["End", 1], ["Near"], ["Point", 1], ["Midpoint", 1], ["Center"], ["Intersection", 1], ["Perpendicular", 1], ["Tangent"], ["Quadrant"], ["Knot"], ["Vertex"], ["On curve", 0, 1], ["On surface", 0, 1], ["On polysurface", 0, 1], ["On mesh", 0, 1], ["Project"], ["SmartTrack", 1]];

function TopBar() {
  const b = "h-4 rounded text-[13px] leading-4 font-semibold text-[#6a6a6a]";
  const lit = "h-4 rounded bg-[#cbcccb] text-[13px] leading-4 font-semibold text-[#3c3c3c]";
  return (
    <header className="flex h-9 shrink-0 items-center bg-[#eff1f0] pl-[9px] pr-1">
      <button aria-label="Toggle left sidebar"><svg viewBox="0 0 20 20" className="h-5 w-5"><rect x="1.500" y="1.500" width="17" height="17" fill="#fff" stroke="#1a78ff" strokeWidth="1.500" /><rect x="1" y="1" width="6" height="18" fill="#0a6cff" /></svg></button>
      <nav className="mb-0.5 ml-[49px] flex items-center whitespace-nowrap">
        <button className={b + " w-[72px]"}>Grid Snap</button>
        <button className={b + " ml-[10px] w-[66px]"}>Ortho</button>
        <button className={b + " ml-1 w-[64px]"}>Planar</button>
        <button className={lit + " ml-1.5 w-[92px]"}>SmartTrack</button>
        <button className={lit + " ml-2 w-[72px]"}>Gumball</button>
        <button className={b + " ml-2 w-[66px]"}>History</button>
      </nav>
      <div className="mb-0.5 ml-auto flex items-center gap-2.5 text-[#6b6b6b]">
        <button aria-label="Selection filter" className="pt-0.5"><svg viewBox="0 0 24 24" className="h-[22px] w-[22px]" fill="none" stroke="currentColor" strokeWidth="1.200"><path d="M19 2h4v4M1 19v4h4M3 5h16v2l-6 7v8h-3v-8L3 7zM3 7h16" /></svg></button>
        <button aria-label="Snap point" className="ml-1 pt-0.5"><svg viewBox="0 0 24 24" className="h-[22px] w-[22px]" fill="none" stroke="#8a8a8a" strokeWidth="1.200"><circle cx="11.500" cy="12" r="9.500" /><path d="M12 12h11" stroke="#555" /><rect x="10" y="10" width="4" height="4" fill="#444" stroke="none" /></svg></button>
        <button aria-label="Record history" className="pt-0.5"><svg viewBox="0 0 24 24" className="h-[22px] w-[22px]" fill="none" stroke="currentColor" strokeWidth="1.300"><circle cx="12" cy="12" r="10.500" /><circle cx="12" cy="12" r="5.500" /></svg></button>
        <button className="flex h-[18px] w-[192px] items-center rounded border border-[#dfe1e0] px-0.5 text-[11px] text-[#555]"><span className="h-3.5 w-3.5 bg-[#00f2f2]" /><span className="flex-1">new</span></button>
      </div>
      <button aria-label="Toggle right sidebar" className="ml-[388px]"><svg viewBox="0 0 20 20" className="h-5 w-5"><rect x="1.500" y="1.500" width="17" height="17" fill="#fff" stroke="#1a78ff" strokeWidth="1.500" /><rect x="13.500" y="1" width="5.500" height="18" fill="#0a6cff" /></svg></button>
    </header>
  );
}

function LeftPanel() {
  return (
    <aside className="flex w-[214px] shrink-0 flex-col border-r border-[#777] bg-[#ececec]">
      <div className="h-[26px] border-b border-[#c4c4c4] bg-linear-to-b from-[#f6f6f6] to-[#dedede]" />
      <div className="px-[5px] pt-[10px]">
        <input aria-label="Command" placeholder="Command" className="h-[21px] w-[200px] border border-[#d4d4d4] border-b-[#aaa] bg-white px-1 text-[13px] placeholder:text-[#bdbdbd]" />
      </div>
      <div className="grid grid-cols-7 gap-1.5 pt-[11px] pr-[9px] pb-[125px]">
        {modelTools.map(([n, art]) => <button key={n} aria-label={n} className="h-6 w-6"><Svg>{art}</Svg></button>)}
      </div>
      <div className="h-[3px] bg-[#777]" />
      <fieldset className="px-[15px] pt-[4px]">
        <Radio name="snapmode" label="Persistent" on />
        <Radio name="snapmode" label="One shot" />
      </fieldset>
      <div className="flex flex-col pl-[17px] pt-[3px]">
        {osnaps.map(([n, on, off]) => <div key={n} className="flex h-5 items-center"><Check label={n} on={!!on} off={!!off} /></div>)}
        <div className="mt-[18px] flex h-5 items-center"><Check label="Disable all" /></div>
      </div>
    </aside>
  );
}

function ViewportArea() {
  const views = ["Top", "Front", "Right"];
  const bar = <span className="h-[13px] w-px bg-[#777]" />;
  return (
    <main className="flex min-w-0 flex-1 flex-col">
      <nav className="flex h-[26px] shrink-0 items-center border-b border-[#777] bg-linear-to-b from-[#fcfcfc] to-[#dedede] pl-[9px] pb-[3px] text-[13px] text-[#777]">
        <button aria-label="Four views" className="mt-1"><svg viewBox="0 0 16 16" className="h-4 w-4" fill="none" stroke="#999"><path d="M1 1.500h14v13H1zM8 1.500v13M1 8h14" /></svg></button>
        <button aria-label="Single view" className="ml-4 mt-1 mr-[13px] h-[15px] w-4 border border-[#7fb0f7]" />
        {bar}
        <button className="mx-5 text-[#1b76f2]">Perspective</button>
        {views.map((v) => <React.Fragment key={v}>{bar}<button className="mx-[19px]">{v}</button></React.Fragment>)}
        {bar}
        <button className="mx-5">Layouts...</button>
      </nav>
      <div className="relative flex-1 overflow-hidden">
        <Scene />
        <span className="absolute left-px top-px bg-[#054b8a] px-[5px] text-[12px] leading-[19px] font-semibold text-white">Perspective</span>
      </div>
    </main>
  );
}

function RightPanel() {
  return (
    <aside className="flex w-[291px] shrink-0 flex-col border-l border-[#777] bg-[#ececec]">
      <div className="h-[60px] shrink-0 border-b border-[#d6d6d6] bg-linear-to-b from-[#f8f8f8] to-[#dedede]">
        <div className="flex justify-end pt-[5px]"><GearButton className={edgeGear} /></div>
        <div className="flex justify-end pr-[102px] pt-1.5"><svg viewBox="0 0 24 24" className="h-4 w-4" fill="none" stroke="#777" strokeWidth="1.500" aria-hidden="true"><circle cx="18" cy="7" r="5.500" /><path d="M14 11L4 21" /></svg></div>
      </div>
      <div className="flex">
        <div className="flex-1">
          <div className="pl-7 pr-[21px] pt-[9px]"><input aria-label="Title" className="h-[18px] w-full border border-[#d6d6d6] border-b-[#aaa] bg-white px-1" /></div>
          <div className="flex h-[30px] items-center gap-2.5 pl-7"><span>Size:</span><span>1136 x 851</span></div>
          <div className="-mt-px flex h-4 items-center pl-7"><Check label="Locked" /></div>
          <hr className="mx-2 mt-[11px] border-[#cfcfcf]" />
          <fieldset className="mt-[7px] pl-2">
            <legend className="h-4 leading-4">Projection</legend>
            <div className="pl-5">
              <Radio name="projection" label="Parallel" />
              <Radio name="projection" label="Perspective" on />
              <Radio name="projection" label="Two point perspective" />
            </div>
          </fieldset>
          <hr className="mx-2 mt-[22px] border-[#cfcfcf]" />
          <div className="mt-2 h-4 pl-2 leading-4">Wallpaper</div>
          <div className="relative mt-1 ml-7 flex h-5 w-[104px] items-center">
            <select aria-label="Wallpaper image" className="h-5 w-full appearance-none px-1"><option>Choose...</option></select>
            <UpDown className="pointer-events-none absolute right-1 h-3 w-2" />
          </div>
        </div>
        <div className="flex w-1.5 justify-end bg-[#f8f8f8] pt-1"><span className="h-20 w-1 rounded bg-[#bdbdbd]" /></div>
      </div>
      <div className="mr-1.5 h-[3px] shrink-0 bg-[#777]" />
      <div className="h-[59px] shrink-0 border-b border-[#c8c8c8] bg-linear-to-b from-[#f8f8f8] to-[#d6d6d6]">
        <div className="flex h-6 items-center pl-3"><span className="flex-1 text-center">Panels: Layers</span><GearButton className={edgeGear} /></div>
        <div className="flex gap-2 pl-[30px] pt-0.5">
          {panelIcons.map(([n, art], i) => (
            <button key={n} aria-label={n} className={i === 0 ? "text-[#1478ff]" : "text-[#7b7b7b]"}>
              <svg viewBox="0 0 24 24" className="h-[22px] w-[22px]" fill="none" stroke="currentColor" strokeWidth="1.300" strokeLinejoin="round">{art}</svg>
            </button>
          ))}
        </div>
      </div>
      <div className="flex-1 overflow-hidden bg-white">
        <table className="w-full table-fixed border-collapse">
          <colgroup><col /><col className="w-[24px]" /><col className="w-[23px]" /><col className="w-[23px]" /><col className="w-[30px]" /></colgroup>
          <thead>
            <tr className="h-[26px] border-b border-[#dcdcdc]">
              <th scope="col" className="pl-7 text-left font-normal">Name</th>
              {["Current", "On", "Locked", "Color"].map((n) => <th key={n} scope="col" aria-label={n} className="p-0"><div className="h-4 border-l border-[#d4d4d4]" /></th>)}
            </tr>
            <tr className="h-[6px]" aria-hidden="true"><td colSpan={5} className="p-0" /></tr>
          </thead>
          <tbody>
            {layers.map(([n, depth, on, locked, color, open]) => (
              <tr key={n} className="h-[17px]">
                <td className={"p-0 leading-[17px] " + indents[depth]}>
                  <span className="flex items-center gap-1">
                    <span className="w-3">{open && <svg viewBox="0 0 12 12" className="h-3 w-3" fill="none" stroke="#777" strokeWidth="1.400"><path d="M2 4l4 4.500L10 4" /></svg>}</span>
                    {n}
                  </span>
                </td>
                <td className="p-0"><span className="flex justify-center"><input type="radio" name="current" aria-label={"Make " + n + " current"} defaultChecked={n === "new"} className={radioClass} /></span></td>
                <td className={n === "new" ? "p-0 opacity-40" : "p-0"}><Bulb on={on} /></td>
                <td className={n === "new" ? "p-0 opacity-30" : "p-0"}><Padlock locked={locked} /></td>
                <td className="p-0 pl-2"><span className="block h-3.5 w-3.5" style={{ backgroundColor: color }} /></td>
              </tr>
            ))}
          </tbody>
        </table>
      </div>
      <div className="flex h-4 shrink-0 items-center border-y border-[#d8d8d8] bg-[#f8f8f8] px-0.5"><span className="h-2 w-[207px] rounded-full bg-[#c1c1c1]" /></div>
      <footer className="flex h-8 shrink-0 items-center gap-4 pl-[18px]">
        <div className="flex h-4 rounded border border-[#dcdcdc] text-[#777]">
          <button aria-label="Add layer" className="flex w-6 items-center justify-center border-r border-[#dcdcdc]"><svg viewBox="0 0 10 10" className="h-2.5 w-2.5" stroke="currentColor"><path d="M5 0v10M0 5h10" /></svg></button>
          <button aria-label="Remove layer" className="flex w-6 items-center justify-center text-[#b4b4b4]"><svg viewBox="0 0 10 10" className="h-2.5 w-2.5" stroke="currentColor"><path d="M0 5h10" /></svg></button>
        </div>
        <GearButton className="w-8 justify-center rounded bg-white shadow-[0_0_2px_rgba(0,0,0,0.4)]" />
      </footer>
    </aside>
  );
}

export default function App() {
  return (
    <div className="relative flex min-h-screen w-full flex-col overflow-hidden bg-[#ececec] font-[Inter,Roboto,sans-serif] text-[11px] text-[#222] [font-feature-settings:'calt'_0]">
      <TopBar />
      <nav className="flex h-4 shrink-0 overflow-hidden border-t border-[#777] bg-[#cdcdcd] pl-1" aria-label="Toolbar tabs">
        {tabs.map(([n, w], i) => (
          <button key={n} className={`shrink-0 whitespace-nowrap border-l border-b border-l-[#8c8c8c] text-[10px] leading-[14px] font-bold ${w} ${i === 0 ? "rounded-t border-b-transparent bg-[#e9e9e9] text-[#1478ff]" : "border-b-[#9c9c9c] text-black"}`}>{n}</button>
        ))}
        <span className="flex-1 border-b border-[#9c9c9c]" />
      </nav>
      <div className="flex h-8 shrink-0 gap-1.5 overflow-hidden border-b border-[#d2d2d2] bg-[#e9e9e9] pt-1" role="toolbar" aria-label="Standard">
        {standardTools.map(([n, art]) => <button key={n} aria-label={n} className="h-6 w-6 shrink-0"><Svg>{art}</Svg></button>)}
      </div>
      <div className="flex min-h-0 flex-1">
        <LeftPanel />
        <ViewportArea />
        <RightPanel />
      </div>
      <footer className="flex h-[26px] shrink-0 items-center bg-linear-to-b from-[#d6d6d6] to-[#cacaca] pl-[3px] pt-1">
        <svg viewBox="0 0 12 12" className="h-3 w-3" stroke="#666" aria-hidden="true"><path d="M0 1.500h1.500M3 1.500h9M0 6h1.500M3 6h9M0 10.500h1.500M3 10.500h9" /></svg>
        <span className="ml-[3px]">OK</span>
        <span className="ml-auto">Millimeters</span>
        <div className="relative ml-4 flex items-center">
          <select aria-label="Coordinate system" className="h-4 w-[70px] appearance-none rounded border border-[#999] px-1 leading-[13px]"><option>CPlane</option></select>
          <UpDown className="pointer-events-none absolute right-1 h-3 w-2" />
        </div>
        <span className="ml-[14px] w-[82px]">X: 24.716</span>
        <span className="w-[85px]">Y: 36.206</span>
        <span className="w-[177px]">Z: 0.000</span>
      </footer>
      <FloatingBar title="COMPAS" groups={compasGroups} place="right-[91px] top-[34px]" />
      <FloatingBar title="RhinoVAULT 3" groups={rhinoGroups} place="right-[112px] top-[107px]" />
    </div>
  );
}
